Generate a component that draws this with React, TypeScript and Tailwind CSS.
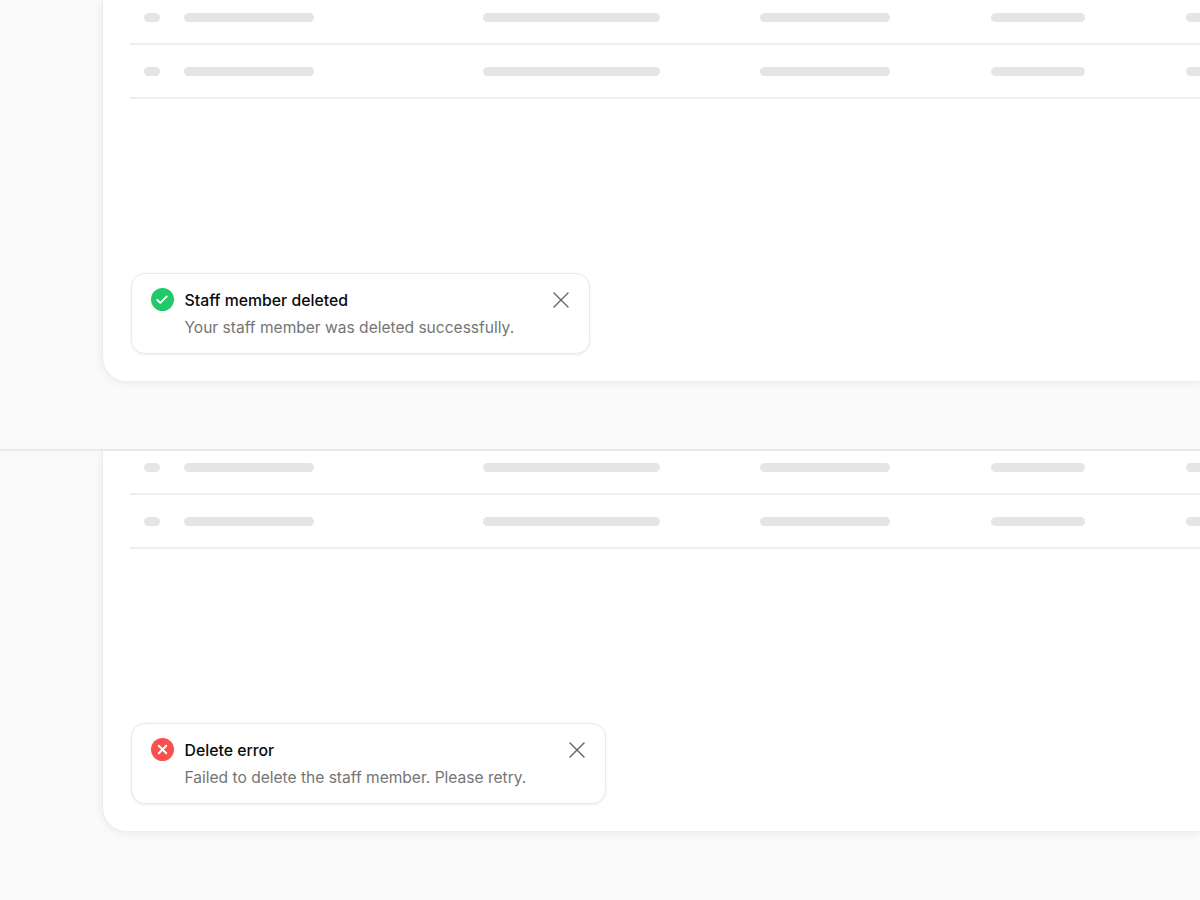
import { X, Check } from 'lucide-react'

function SkeletonRow() {
  return (
    <div className="flex items-center h-[54px] border-b-2 border-[#eeeeee] pt-[1px] pl-[14px]">
      <div className="w-4 h-[9px] rounded-full bg-[#e5e5e5] shrink-0" />
      <div className="ml-[24px] w-[130px] h-[9px] rounded-full bg-[#e5e5e5] shrink-0" />
      <div className="ml-[169px] w-[177px] h-[9px] rounded-full bg-[#e5e5e5] shrink-0" />
      <div className="ml-[100px] w-[130px] h-[9px] rounded-full bg-[#e5e5e5] shrink-0" />
      <div className="ml-[101px] w-[94px] h-[9px] rounded-full bg-[#e5e5e5] shrink-0" />
      <div className="ml-[101px] w-[60px] h-[9px] rounded-full bg-[#e5e5e5] shrink-0" />
    </div>
  )
}

function Toast({ kind, title, text, width }: { kind: 'ok' | 'err'; title: string; text: string; width: string }) {
  return (
    <div className={`${width} h-[81px] bg-white rounded-[14px] border border-[#e9e9e9] shadow-[0_1px_3px_rgba(0,0,0,0.07)] flex pl-[19px] pr-[14px] pt-[14px]`}>
      <div className={`w-[23px] h-[23px] rounded-full flex items-center justify-center shrink-0 ${kind === 'ok' ? 'bg-[#22c96b]' : 'bg-[#fb5050]'}`}>
        {kind === 'ok' ? <Check size={14} strokeWidth={3.2} className="text-white" /> : <X size={15} strokeWidth={3} className="text-white" />}
      </div>
      <div className="ml-[11px] mt-[1px] flex-1 min-w-0">
        <div className="text-[15.8px] leading-[24px] font-[450] text-[#0a0a0a]">{title}</div>
        <div className="mt-[3px] text-[15.55px] leading-[24px] text-[#757575]">{text}</div>
      </div>
      <X size={28} strokeWidth={1.2} className="text-[#666666] shrink-0 -mt-[2px]" />
    </div>
  )
}

function Panel({ children }: { children: React.ReactNode }) {
  return (
    <div className="h-[450px] overflow-hidden bg-[#fafafa]">
      <div className="ml-[102px] h-[381px] bg-white rounded-bl-[24px] border-l border-[#ececec] shadow-[0_2px_8px_rgba(0,0,0,0.07)] overflow-hidden flex flex-col pl-[27.5px] pb-[27px]">
        <div className="-mt-[9px] -ml-[0.5px]">
          <SkeletonRow />
          <SkeletonRow />
        </div>
        <div className="mt-auto">{children}</div>
      </div>
    </div>
  )
}

export default function App() {
  return (
    <div className="w-[1200px] h-[900px] overflow-hidden bg-[#fafafa] font-['Inter',sans-serif]">
      <Panel>
        <Toast kind="ok" width="w-[459.5px]" title="Staff member deleted" text="Your staff member was deleted successfully." />
      </Panel>
      <div className="h-[2px] -my-[1px] bg-[#e9e9e9] relative z-10" />
      <Panel>
        <Toast kind="err" width="w-[475.5px]" title="Delete error" text="Failed to delete the staff member. Please retry." />
      </Panel>
    </div>
  )
}
